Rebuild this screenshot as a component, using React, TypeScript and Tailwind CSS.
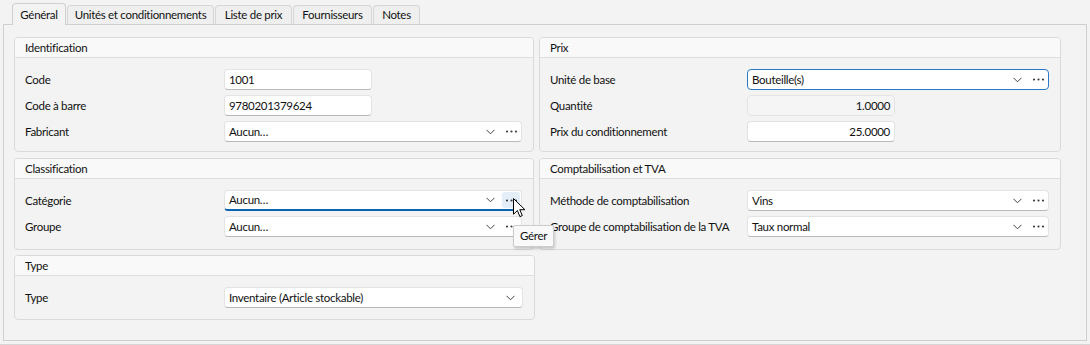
import React from "react";

const tabs = [
  { label: "Général", w: "w-[54px]", active: true },
  { label: "Unités et conditionnements", w: "w-[147px]" },
  { label: "Liste de prix", w: "w-[77px]" },
  { label: "Fournisseurs", w: "w-[79px]" },
  { label: "Notes", w: "w-[47px]" },
];

function Chevron() {
  return (
    <svg width="9" height="6" viewBox="0 0 9 6" fill="none">
      <polyline points="0.5,0.8 4.5,4.8 8.5,0.8" stroke="#444" strokeWidth="1" />
    </svg>
  );
}

function Dots() {
  return (
    <svg width="11" height="3" viewBox="0 0 11 3">
      <circle cx="1" cy="1.5" r="1.1" fill="#3c3c3c" />
      <circle cx="5.5" cy="1.5" r="1.1" fill="#3c3c3c" />
      <circle cx="10" cy="1.5" r="1.1" fill="#3c3c3c" />
    </svg>
  );
}

function GroupBox({ title, className, children }: { title: string; className: string; children: React.ReactNode }) {
  return (
    <div className={`border border-[#dadada] rounded-[4px] overflow-hidden flex flex-col ${className}`}>
      <div className="h-[20px] leading-[19px] bg-[#f9f9f9] border-b border-[#dedede] px-[10px]">{title}</div>
      <div className="flex flex-col gap-[5px] pt-[11px] pl-[10px] pr-[11px]">{children}</div>
    </div>
  );
}

function Field({ label, wide, children }: { label: string; wide?: boolean; children: React.ReactNode }) {
  return (
    <div className="flex items-center h-[21px]">
      <div className={`${wide ? "w-[197px]" : "w-[199px]"} shrink-0 whitespace-nowrap`}>{label}</div>
      {children}
    </div>
  );
}

function TextBox({ value, right, readOnly }: { value: string; right?: boolean; readOnly?: boolean }) {
  return (
    <div
      className={`w-[148px] h-[21px] rounded-[4px] border flex items-center px-[4px] ${
        right ? "justify-end" : ""
      } ${
        readOnly
          ? "bg-[#f5f5f5] border-[#e4e4e4]"
          : "bg-white border-[#e3e3e3] border-b-[#b9b9b9]"
      }`}
    >
      {value}
    </div>
  );
}

function Combo({
  value,
  dots = true,
  focus,
  hover,
}: {
  value: string;
  dots?: boolean;
  focus?: "border" | "bottom";
  hover?: boolean;
}) {
  const border =
    focus === "border"
      ? "border-[#2a78c4]"
      : focus === "bottom"
      ? "border-[#e3e3e3] border-b-2 border-b-[#0a64b4]"
      : "border-[#e3e3e3] border-b-[#b9b9b9]";
  return (
    <div className={`flex-1 h-[21px] rounded-[4px] border bg-white flex items-center pl-[4px] pr-[1px] ${border}`}>
      <div className="flex-1 whitespace-nowrap">{value}</div>
      {dots ? (
        <>
          <div className="w-[16px] mr-[4px] flex justify-center">
            <Chevron />
          </div>
          <div className={`w-[18px] h-[16px] rounded-[3px] flex items-center justify-center ${hover ? "bg-[#e3eef9]" : ""}`}>
            <Dots />
          </div>
        </>
      ) : (
        <div className="w-[18px] mr-[2px] flex justify-center">
          <Chevron />
        </div>
      )}
    </div>
  );
}

export default function App() {
  return (
    <div className="relative w-[1090px] h-[345px] bg-[#f3f3f3] border-b border-[#d6d6d6] pt-[3px] px-[3px] text-[11.5px] tracking-[-0.3px] text-[#111111] font-['Segoe_UI',Lato,sans-serif]">
      {/* tab strip */}
      <div className="flex items-end h-[21px] pl-[9px] gap-[1px]">
        {tabs.map((t) =>
          t.active ? (
            <div
              key={t.label}
              className={`${t.w} h-[22px] -mb-px relative z-10 bg-[#f3f3f3] border border-b-0 border-[#d0d0d0] rounded-t-[4px] flex items-center justify-center whitespace-nowrap`}
            >
              {t.label}
            </div>
          ) : (
            <div
              key={t.label}
              className={`${t.w} h-[19px] bg-[#efefef] border border-b-0 border-[#d6d6d6] rounded-t-[4px] flex items-center justify-center whitespace-nowrap`}
            >
              {t.label}
            </div>
          )
        )}
      </div>

      {/* panel */}
      <div className="h-[317px] border border-[#cfcfcf] pt-[12px] pl-[10px]">
        <div className="flex gap-[5px]">
          <GroupBox title="Identification" className="w-[520px] h-[115px]">
            <Field label="Code">
              <TextBox value="1001" />
            </Field>
            <Field label="Code à barre">
              <TextBox value="9780201379624" />
            </Field>
            <Field label="Fabricant">
              <Combo value="Aucun…" />
            </Field>
          </GroupBox>
          <GroupBox title="Prix" className="w-[522px] h-[115px]">
            <Field label="Unité de base" wide>
              <Combo value="Bouteille(s)" focus="border" />
            </Field>
            <Field label="Quantité" wide>
              <TextBox value="1.0000" right readOnly />
            </Field>
            <Field label="Prix du conditionnement" wide>
              <TextBox value="25.0000" right />
            </Field>
          </GroupBox>
        </div>

        <div className="flex gap-[5px] mt-[6px]">
          <GroupBox title="Classification" className="w-[520px] h-[92px]">
            <Field label="Catégorie">
              <Combo value="Aucun…" focus="bottom" hover />
            </Field>
            <Field label="Groupe">
              <Combo value="Aucun…" />
            </Field>
          </GroupBox>
          <GroupBox title="Comptabilisation et TVA" className="w-[522px] h-[92px]">
            <Field label="Méthode de comptabilisation" wide>
              <Combo value="Vins" />
            </Field>
            <Field label="Groupe de comptabilisation de la TVA" wide>
              <Combo value="Taux normal" />
            </Field>
          </GroupBox>
        </div>

        <div className="mt-[5px]">
          <GroupBox title="Type" className="w-[521px] h-[65px]">
            <Field label="Type">
              <Combo value="Inventaire (Article stockable)" dots={false} />
            </Field>
          </GroupBox>
        </div>
      </div>

      {/* tooltip */}
      <div className="absolute left-[513px] top-[225px] w-[41px] h-[22px] bg-[#f9f9f9] border border-[#cccccc] rounded-[2px] shadow-[1px_2px_3px_rgba(0,0,0,0.18)] pl-[6px] leading-[20px] z-20">
        Gérer
      </div>

      {/* mouse cursor */}
      <svg className="absolute left-[513px] top-[198px] z-30" width="13" height="20" viewBox="0 0 13 20">
        <path
          d="M0.5 0.5 L0.5 16.2 L4.4 12.6 L6.9 18.6 L9.3 17.6 L6.8 11.7 L11.9 11.7 Z"
          fill="#ffffff"
          stroke="#000000"
          strokeWidth="1"
          strokeLinejoin="miter"
        />
      </svg>
    </div>
  );
}
